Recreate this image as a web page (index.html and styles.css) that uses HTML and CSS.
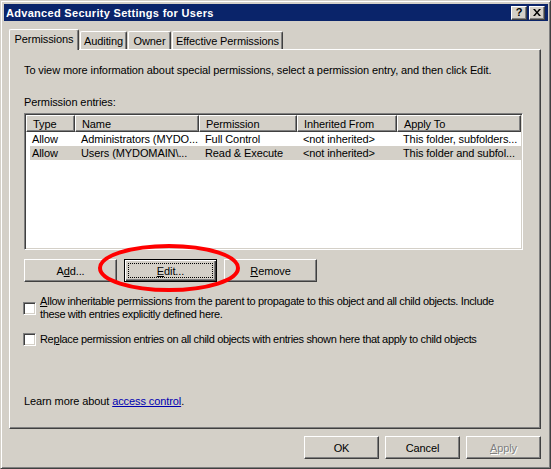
FILE: index.html
```html
<!DOCTYPE html>
<html lang="en">
<head>
    <meta charset="UTF-8">
    <title>Advanced Security Settings for Users</title>
    <link rel="stylesheet" href="styles.css">
</head>
<body>
    <div class="window">
        <div class="titlebar">
            <span class="title">Advanced Security Settings for Users</span>
            <div class="caption-buttons">
                <button class="cap-btn help">?</button>
                <button class="cap-btn">
                    <svg width="8" height="7" viewBox="0 0 8 7">
                        <path d="M0 0h2l2 2.5L6 0h2L5 3.5 8 7H6L4 4.5 2 7H0l3-3.5z" fill="#000"/>
                    </svg>
                </button>
            </div>
        </div>

        <div class="dialog">
            <div class="tabs">
                <div class="tab active">Permissions</div>
                <div class="tab auditing">Auditing</div>
                <div class="tab owner">Owner</div>
                <div class="tab effective">Effective Permissions</div>
            </div>

            <div class="panel">
                <p class="intro">To view more information about special permissions, select a permission entry, and then click Edit.</p>

                <div class="field-label">Permission entries:</div>
                <div class="listview">
                    <table>
                        <colgroup>
                            <col style="width: 49px">
                            <col style="width: 124px">
                            <col style="width: 98px">
                            <col style="width: 100px">
                            <col style="width: 124px">
                        </colgroup>
                        <thead>
                            <tr>
                                <th>Type</th>
                                <th>Name</th>
                                <th>Permission</th>
                                <th>Inherited From</th>
                                <th>Apply To</th>
                            </tr>
                        </thead>
                        <tbody>
                            <tr>
                                <td>Allow</td>
                                <td>Administrators (MYDO...</td>
                                <td>Full Control</td>
                                <td>&lt;not inherited&gt;</td>
                                <td>This folder, subfolders...</td>
                            </tr>
                            <tr class="selected">
                                <td>Allow</td>
                                <td>Users (MYDOMAIN\...</td>
                                <td>Read &amp; Execute</td>
                                <td>&lt;not inherited&gt;</td>
                                <td>This folder and subfol...</td>
                            </tr>
                        </tbody>
                    </table>
                </div>

                <div class="list-buttons">
                    <button class="btn">A<u>d</u>d...</button>
                    <span class="edit-wrap">
                        <button class="btn default"><u>E</u>dit...</button>
                        <svg class="highlight" width="146" height="52" viewBox="0 0 146 52">
                            <ellipse cx="72" cy="25" rx="69" ry="22" fill="none" stroke="#ff0000" stroke-width="4"/>
                        </svg>
                    </span>
                    <button class="btn"><u>R</u>emove</button>
                </div>

                <label class="check first">
                    <span class="box"></span>
                    <span class="check-text">
                        <span class="line"><u>A</u>llow inheritable permissions from the parent to propagate to this object and all child objects. Include</span>
                        <span class="line">these with entries explicitly defined here.</span>
                    </span>
                </label>
                <label class="check second">
                    <span class="box"></span>
                    <span class="check-text">Re<u>p</u>lace permission entries on all child objects with entries shown here that apply to child objects</span>
                </label>

                <p class="learn">Learn more about <a href="#">access control</a>.</p>
            </div>

            <div class="footer">
                <button class="btn wide">OK</button>
                <button class="btn wide">Cancel</button>
                <button class="btn wide disabled"><u>A</u>pply</button>
            </div>
        </div>
    </div>
</body>
</html>
```

FILE: styles.css
```css
body {
    margin: 0;
    font-family: "Liberation Sans", Arial, sans-serif;
    font-size: 11px;
    letter-spacing: -0.1px;
    color: #000;
    background-color: #d4d0c8;
}

.window {
    width: 551px;
    height: 469px;
    box-sizing: border-box;
    background-color: #d4d0c8;
    border: 1px solid;
    border-color: #d4d0c8 #404040 #404040 #d4d0c8;
    box-shadow: inset 1px 1px #fff, inset -1px -1px #808080;
    padding: 3px 2px 0 3px;
    display: flex;
    flex-direction: column;
}

.titlebar {
    height: 17px;
    background-color: #0a246a;
    color: #fff;
    display: flex;
    align-items: center;
    justify-content: space-between;
    padding: 0 3px 0 2px;
}

.title {
    font-weight: bold;
    letter-spacing: 0.3px;
}

.caption-buttons {
    display: flex;
    gap: 2px;
}

.cap-btn {
    width: 16px;
    height: 14px;
    box-sizing: border-box;
    padding: 0;
    background-color: #d4d0c8;
    border: 1px solid;
    border-color: #fff #404040 #404040 #fff;
    box-shadow: inset -1px -1px #808080;
    display: flex;
    align-items: center;
    justify-content: center;
}

.cap-btn.help {
    font-family: "Liberation Sans", Arial, sans-serif;
    font-weight: bold;
    font-size: 11px;
    line-height: 1;
    color: #000;
}

.dialog {
    flex: 1;
    padding: 8px 7px 0 5px;
}

.tabs {
    display: flex;
    height: 20px;
    align-items: flex-end;
    position: relative;
    z-index: 1;
}

.tab {
    height: 18px;
    box-sizing: border-box;
    border: 1px solid;
    border-color: #fff #404040 transparent #fff;
    border-bottom: none;
    border-radius: 2px 2px 0 0;
    box-shadow: inset -1px 0 #808080;
    display: flex;
    align-items: center;
    justify-content: center;
    margin-left: 1px;
    white-space: nowrap;
}

.tab.active {
    width: 70px;
    height: 21px;
    margin-bottom: -1px;
    margin-left: 0;
    padding-bottom: 2px;
    background-color: #d4d0c8;
}

.tab.auditing {
    width: 47px;
}

.tab.owner {
    width: 43px;
}

.tab.effective {
    width: 111px;
}

.panel {
    height: 380px;
    box-sizing: border-box;
    border: 1px solid;
    border-color: #fff #404040 #404040 #fff;
    box-shadow: inset -1px -1px #808080;
    padding: 14px 14px 0 14px;
}

.intro {
    margin: 0;
    line-height: 13px;
}

.field-label {
    margin-top: 19px;
    line-height: 13px;
}

.listview {
    margin-top: 4px;
    width: 499px;
    height: 137px;
    box-sizing: border-box;
    background-color: #fff;
    border: 1px solid;
    border-color: #808080 #fff #fff #808080;
    box-shadow: inset 1px 1px #404040, inset -1px -1px #d4d0c8;
    padding: 1px;
}

.listview table {
    table-layout: fixed;
    border-collapse: separate;
    border-spacing: 0;
    width: 495px;
}

.listview th {
    height: 17px;
    box-sizing: border-box;
    font-weight: normal;
    text-align: left;
    padding: 0 0 0 6px;
    background-color: #d4d0c8;
    border: 1px solid;
    border-color: #fff #404040 #404040 #fff;
    box-shadow: inset -1px -1px #808080;
    white-space: nowrap;
    overflow: hidden;
}

.listview td {
    height: 14px;
    padding: 0 0 0 6px;
    line-height: 14px;
    white-space: nowrap;
    overflow: hidden;
}

.listview tr.selected td {
    background-color: #d4d0c8;
}

.listview tr.selected td:first-child {
    background: linear-gradient(to right, #fff 4px, #d4d0c8 4px);
}

.list-buttons {
    margin-top: 9px;
    display: flex;
    gap: 7px;
}

.btn {
    font-family: inherit;
    font-size: 11px;
    letter-spacing: inherit;
    color: #000;
    width: 93px;
    height: 23px;
    box-sizing: border-box;
    padding: 0;
    background-color: #d4d0c8;
    border: 1px solid;
    border-color: #fff #404040 #404040 #fff;
    box-shadow: inset -1px -1px #808080;
}

.edit-wrap {
    position: relative;
    display: flex;
}

.btn.default {
    position: relative;
    border-color: #000;
    box-shadow: inset 1px 1px #fff, inset -1px -1px #404040, inset -2px -2px #808080;
}

.btn.default::after {
    content: "";
    position: absolute;
    top: 3px;
    left: 3px;
    right: 3px;
    bottom: 3px;
    border: 1px dotted #000;
}

.highlight {
    position: absolute;
    left: -27px;
    top: -16px;
    z-index: 2;
    pointer-events: none;
}

.check {
    display: flex;
    align-items: center;
    gap: 4px;
    line-height: 13px;
}

.check.first {
    margin-top: 13px;
}

.check.second {
    margin-top: 12px;
}

.box {
    flex: none;
    width: 13px;
    height: 13px;
    box-sizing: border-box;
    margin-left: -1px;
    background-color: #fff;
    border: 1px solid;
    border-color: #808080 #fff #fff #808080;
    box-shadow: inset 1px 1px #404040, inset -1px -1px #d4d0c8;
}

.check-text {
    max-width: 470px;
    letter-spacing: -0.35px;
}

.check-text .line {
    display: block;
    white-space: nowrap;
}

.check-text u {
    letter-spacing: 0;
}

.learn {
    margin: 49px 0 0;
    line-height: 13px;
}

.learn a {
    color: #0000b0;
}

.footer {
    margin-top: 7px;
    display: flex;
    justify-content: flex-end;
    gap: 6px;
}

.btn.wide {
    width: 75px;
}

.btn.disabled {
    color: #808080;
    text-shadow: 1px 1px #fff;
}
```
